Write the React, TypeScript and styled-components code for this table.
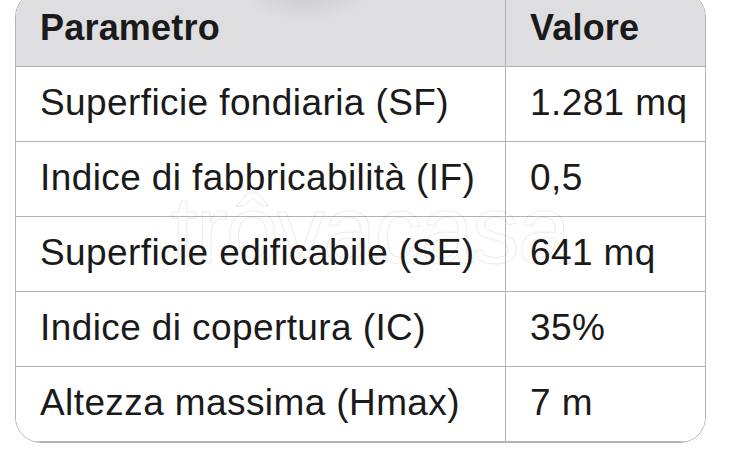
import styled, { createGlobalStyle } from 'styled-components'

const rows = [
  { name: 'Superficie fondiaria (SF)', value: '1.281 mq' },
  { name: 'Indice di fabbricabilità (IF)', value: '0,5' },
  { name: 'Superficie edificabile (SE)', value: '641 mq' },
  { name: 'Indice di copertura (IC)', value: '35%' },
  { name: 'Altezza massima (Hmax)', value: '7 m' }
]

const App = () => {
  return (
    <>
      <GlobalStyle />
      <Page>
        <Table>
          <HeadRow>
            <HeadCell>Parametro</HeadCell>
            <HeadCell $last>Valore</HeadCell>
          </HeadRow>
          {rows.map((row) => (
            <Row key={row.name}>
              <Cell>{row.name}</Cell>
              <Cell $last>{row.value}</Cell>
            </Row>
          ))}
          <Watermark aria-hidden>trôvacasa</Watermark>
        </Table>
      </Page>
    </>
  )
}

export default App

const GlobalStyle = createGlobalStyle`
  html, body {
    margin: 0;
    padding: 0;
    background: #ffffff;
  }
  body {
    width: 737px;
    height: 462px;
    overflow: hidden;
  }
`

const Page = styled.div`
  width: 737px;
  height: 462px;
  padding-left: 15px;
  box-sizing: border-box;
  font-family: 'Liberation Sans', Arial, sans-serif;
  color: #1a1a1a;
`

const Table = styled.div`
  position: relative;
  margin-top: -9px;
  width: 691px;
  border: 1.5px solid #b3b3b3;
  border-radius: 26px;
  overflow: hidden;
  box-sizing: border-box;
`

const HeadRow = styled.div`
  display: grid;
  grid-template-columns: 490px 1fr;
  box-sizing: border-box;
  height: 75px;
  background: radial-gradient(ellipse 60px 22px at 290px 6px, #cfcfd2 0%, #dedee1 100%), #dedee1;
  border-bottom: 1.5px solid #b3b3b3;
`

const Row = styled.div`
  display: grid;
  grid-template-columns: 490px 1fr;
  box-sizing: border-box;
  height: 75px;
  background: #ffffff;
  border-bottom: 1.5px solid #b3b3b3;

  &:last-of-type {
    border-bottom: none;
    height: 73px;
  }
`

const Cell = styled.div<{ $last?: boolean }>`
  display: flex;
  align-items: center;
  padding-left: 24px;
  padding-bottom: 3px;
  font-size: 37px;
  letter-spacing: 0.4px;
  white-space: nowrap;
  border-right: ${(p) => (p.$last ? 'none' : '1.5px solid #b3b3b3')};
`

const HeadCell = styled(Cell)`
  font-weight: 700;
  font-size: 36px;
  letter-spacing: 0.2px;
  padding-bottom: 2px;
`

const Watermark = styled.div`
  position: absolute;
  left: 155px;
  top: 183px;
  font-size: 96px;
  font-weight: 300;
  font-family: 'Liberation Sans', Arial, sans-serif;
  color: transparent;
  -webkit-text-stroke: 1.2px rgba(0, 0, 0, 0.07);
  letter-spacing: -2px;
  pointer-events: none;
`
